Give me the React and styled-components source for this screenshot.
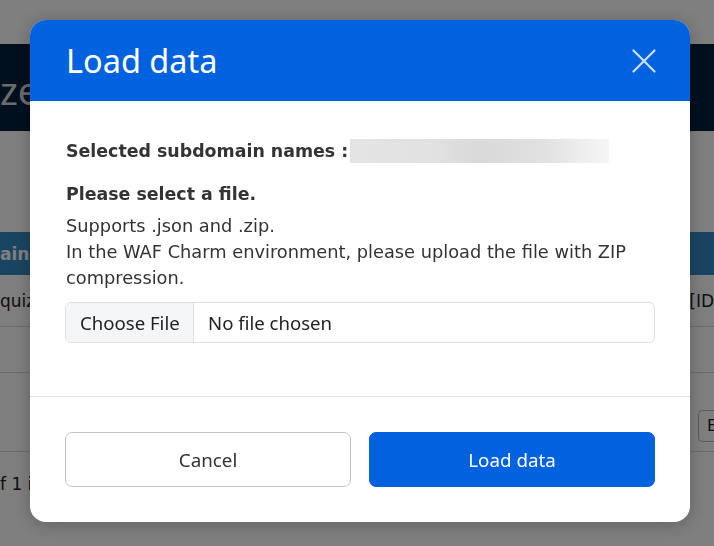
import React from 'react'
import styled, { createGlobalStyle } from 'styled-components'

const GlobalStyle = createGlobalStyle`
  * {
    margin: 0;
    padding: 0;
    box-sizing: border-box;
  }
  body {
    background: #fff;
    font-family: "DejaVu Sans", Verdana, sans-serif;
    color: #222;
    overflow: hidden;
  }
`

// ---- page behind the dialog ----

const Page = styled.div`
  width: 714px;
  height: 546px;
  padding-top: 44px;
  display: flex;
  flex-direction: column;
`

const Banner = styled.div`
  height: 87px;
  background: #02203e;
  display: flex;
  align-items: center;
  padding-top: 4px;
  font-family: "Noto Sans", sans-serif;
  font-size: 38px;
  color: #d8d8d8;
`

const TableHead = styled.div`
  margin-top: 101px;
  height: 43px;
  background: #348ac5;
  display: flex;
  align-items: center;
  color: #fff;
  font-weight: bold;
  font-size: 17px;
`

const Row = styled.div`
  height: ${p => p.$h}px;
  border-bottom: 1px solid #d6d6d6;
  display: flex;
  align-items: ${p => p.$align || 'center'};
  justify-content: ${p => p.$justify || 'space-between'};
  padding-bottom: ${p => p.$pb || 0}px;
  font-size: 17px;
  color: #222;
`

const SmallBtn = styled.span`
  width: 16px;
  height: 32px;
  border: 1px solid #bbb;
  border-right: none;
  border-radius: 5px 0 0 5px;
  padding: 5px 0 0 8px;
  font-size: 16px;
`

const Foot = styled.div`
  padding-top: 22px;
  font-size: 17px;
`

// ---- dialog ----

const Overlay = styled.div`
  position: fixed;
  inset: 0;
  background: rgba(0, 0, 0, 0.5);
  padding: 20px 0 0 30px;
`

const Modal = styled.div`
  width: 660px;
  height: 502px;
  background: #fff;
  border-radius: 16px;
  overflow: hidden;
  box-shadow: 0 2px 18px rgba(0, 0, 0, 0.25);
  display: flex;
  flex-direction: column;
`

const Header = styled.div`
  height: 81px;
  background: #0062df;
  display: flex;
  align-items: center;
  justify-content: space-between;
  padding: 0 34px 0 36px;
`

const Title = styled.h2`
  font-family: "Noto Sans", sans-serif;
  font-weight: 400;
  font-size: 32.5px;
  color: #fff;
  padding-bottom: 1px;
`

const Close = styled.button`
  border: none;
  background: none;
  width: 24px;
  height: 24px;
  display: flex;
  cursor: pointer;
`

const Body = styled.div`
  padding: 38px 35px 0 36px;
  height: 296px;
  border-bottom: 1px solid #e2e2e2;
  color: #333;
  font-size: 17.8px;
`

const Selected = styled.div`
  display: flex;
  align-items: center;
  height: 24px;
  font-weight: bold;
  font-size: 17.4px;
  gap: 2px;
`

const Redacted = styled.span`
  display: inline-block;
  width: 259px;
  height: 24px;
  background: linear-gradient(90deg, #e4e4e4 0%, #e2e2e2 30%, #d9d9d9 50%, #e1e1e1 75%, #f6f6f6 100%);
`

const Label = styled.div`
  margin: 18px 0 6px;
  font-weight: bold;
  font-size: 17.4px;
  line-height: 26px;
`

const Note = styled.p`
  line-height: 26px;
  width: 590px;
`

const FileBox = styled.div`
  margin-top: 11px;
  height: 41px;
  width: 590px;
  margin-left: -1px;
  border: 1px solid #dcdfe3;
  border-radius: 6px;
  display: flex;
  overflow: hidden;
  font-family: "Noto Sans", sans-serif;
  font-size: 18.6px;
  color: #222;
`

const FileButton = styled.span`
  width: 128px;
  background: #f5f6f8;
  border-right: 1px solid #dcdfe3;
  display: flex;
  align-items: center;
  padding-left: 14px;
`

const FileName = styled.span`
  display: flex;
  align-items: center;
  padding-left: 14px;
`

const Footer = styled.div`
  flex: 1;
  display: flex;
  gap: 18px;
  padding: 35px 35px 0 35px;
`

const Button = styled.button`
  width: 286px;
  height: 55px;
  border-radius: 7px;
  font-family: "Noto Sans", sans-serif;
  font-size: 18.8px;
  cursor: pointer;
  border: 1px solid ${p => (p.$primary ? '#0062df' : '#c4c4c4')};
  background: ${p => (p.$primary ? '#0062df' : '#fff')};
  color: ${p => (p.$primary ? '#fff' : '#333')};
`

export default function App() {
  return (
    <>
      <GlobalStyle />
      <Page>
        <Banner>ze</Banner>
        <TableHead>ain</TableHead>
        <Row $h={52}>
          <span>quiz</span>
          <span>[ID</span>
        </Row>
        <Row $h={46} />
        <Row $h={79} $align="flex-end" $justify="flex-end" $pb={9}>
          <SmallBtn>E</SmallBtn>
        </Row>
        <Foot>f 1 i</Foot>
      </Page>

      <Overlay>
        <Modal>
          <Header>
            <Title>Load data</Title>
            <Close aria-label="close">
              <svg width="24" height="24" viewBox="0 0 24 24">
                <path d="M1.5 1.5 L22.5 22.5 M22.5 1.5 L1.5 22.5" stroke="rgba(255,255,255,0.8)" strokeWidth="2.2" strokeLinecap="round" />
              </svg>
            </Close>
          </Header>
          <Body>
            <Selected>
              Selected subdomain names :<Redacted />
            </Selected>
            <Label>Please select a file.</Label>
            <Note>Supports .json and .zip.</Note>
            <Note>In the WAF Charm environment, please upload the file with ZIP compression.</Note>
            <FileBox>
              <FileButton>Choose File</FileButton>
              <FileName>No file chosen</FileName>
            </FileBox>
          </Body>
          <Footer>
            <Button>Cancel</Button>
            <Button $primary>Load data</Button>
          </Footer>
        </Modal>
      </Overlay>
    </>
  )
}
